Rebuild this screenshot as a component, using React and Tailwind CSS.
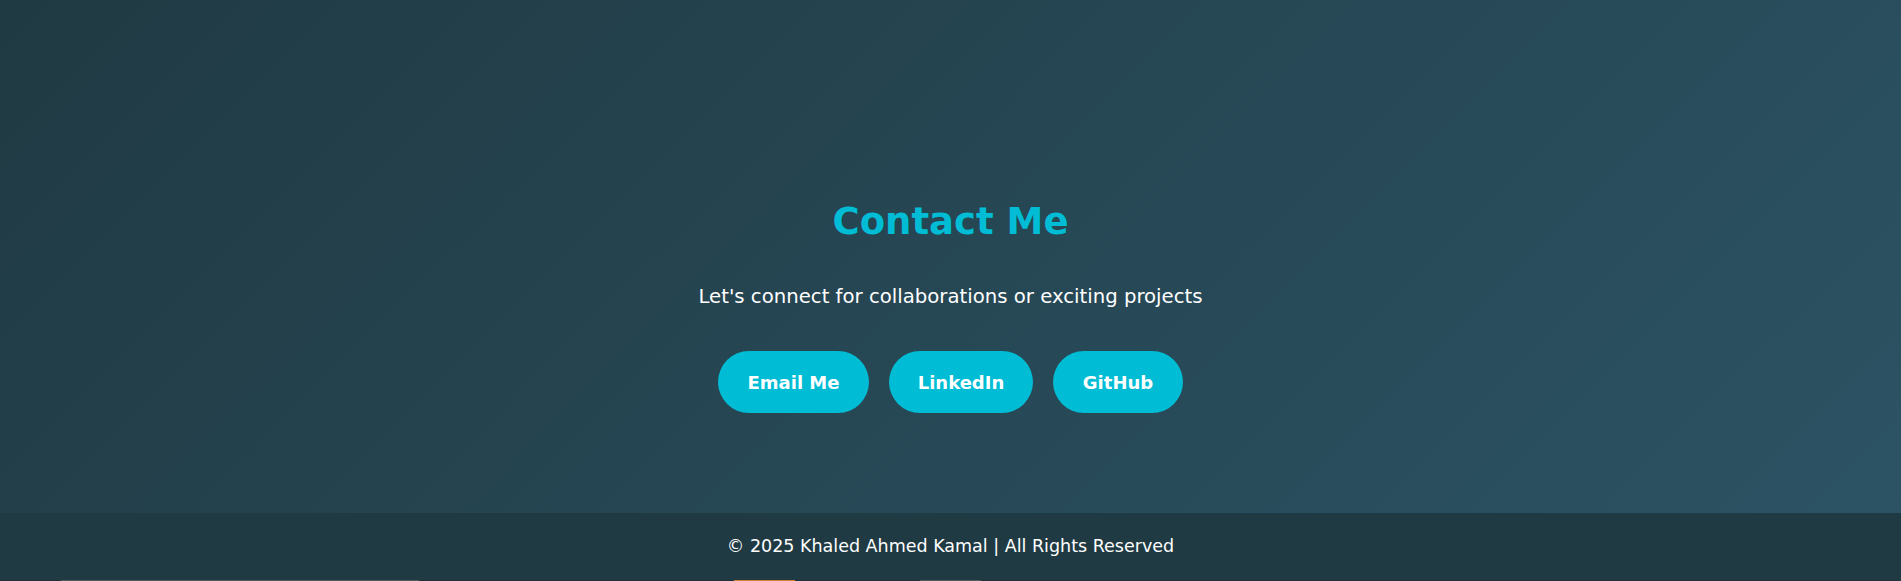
const links = [
  { label: 'Email Me', width: 'w-[151px]' },
  { label: 'LinkedIn', width: 'w-[144px]' },
  { label: 'GitHub', width: 'w-[130px]' },
];

const App = () => {
  return (
    <div className="w-full font-['DejaVu_Sans',_'Noto_Sans',_sans-serif]">
      {/* Contact */}
      <section className="h-[513px] bg-[linear-gradient(135deg,#203a43,#2c5364)] flex flex-col items-center pt-[198px] text-center">
        <h2 className="text-[37px] leading-[48px] font-bold text-[#00bcd4]">Contact Me</h2>
        <p className="mt-[35px] text-[19.7px] leading-[31px] text-white">
          Let's connect for collaborations or exciting projects
        </p>
        <div className="mt-[39px] flex gap-5">
          {links.map((link) => (
            <a
              key={link.label}
              href="#"
              className={`${link.width} h-[62px] rounded-full bg-[#00bcd4] text-white font-bold text-[18px] flex items-center justify-center`}
            >
              {link.label}
            </a>
          ))}
        </div>
      </section>

      {/* Footer */}
      <footer className="h-[67px] bg-[#203a43] flex items-center justify-center">
        <p className="text-white text-[17.5px]">© 2025 Khaled Ahmed Kamal | All Rights Reserved</p>
      </footer>

      {/* edge of next block */}
      <div className="h-px flex bg-[#22303a]">
        <div className="w-[61px]" />
        <div className="w-[358px] bg-[#55595c]" />
        <div className="w-[315px]" />
        <div className="w-[61px] bg-[#d47d2c]" />
        <div className="w-[125px]" />
        <div className="w-[61px] bg-[#55595c]" />
      </div>
    </div>
  );
};

export default App;
